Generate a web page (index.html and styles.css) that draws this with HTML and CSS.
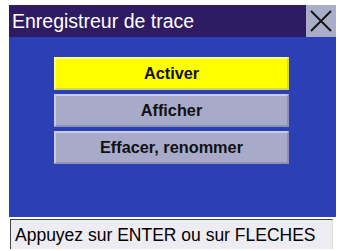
FILE: index.html
```html
<!DOCTYPE html>
<html>
<head>
<meta charset="utf-8">
<link rel="stylesheet" href="styles.css">
</head>
<body>
<div class="device">
  <div class="titlebar">
    <div class="title">Enregistreur de trace</div>
    <div class="close">
      <svg width="30" height="32" viewBox="0 0 30 32"><path d="M5 6 L25 26 M25 6 L5 26" stroke="#111" stroke-width="1.8" fill="none"/></svg>
    </div>
  </div>
  <div class="main">
    <div class="menu">
      <div class="btn active">Activer</div>
      <div class="btn">Afficher</div>
      <div class="btn">Effacer, renommer</div>
    </div>
  </div>
  <div class="status">Appuyez sur ENTER ou sur FLECHES</div>
</div>
</body>
</html>
```
FILE: styles.css
```css
html, body {
  margin: 0;
  padding: 0;
  background: #fff;
}
.device {
  margin-left: 9px;
  padding-top: 5px;
  width: 327px;
  font-family: "Liberation Sans", Arial, sans-serif;
}
.titlebar {
  display: flex;
  height: 32px;
  background: #2e1b62;
}
.title {
  flex: 1;
  color: #fff;
  font-size: 19.5px;
  line-height: 32px;
  padding-left: 3px;
}
.close {
  width: 30px;
  height: 32px;
  background: #a9adc7;
}
.close svg { display: block; }
.main {
  height: 180px;
  background: #2a40b4;
  padding-top: 20px;
  box-sizing: border-box;
}
.menu {
  margin-left: 45px;
  width: 235px;
  display: flex;
  flex-direction: column;
  gap: 4px;
}
.btn {
  height: 29px;
  background: #a7aac9;
  border: 2px solid #c9cbe0;
  border-right-color: #8d90b3;
  border-bottom-color: #8d90b3;
  text-align: center;
  font-weight: bold;
  font-size: 16.3px;
  line-height: 29px;
  color: #111;
}
.btn.active {
  background: #ffff00;
  border-color: #ffff8a #d4d45c #d4d45c #ffff8a;
}
.status {
  margin-top: 2px;
  margin-left: 1px;
  width: 323px;
  height: 30px;
  box-sizing: border-box;
  background: #ececf2;
  border-top: 1px solid #444;
  border-left: 1px solid #444;
  border-right: 1px solid #ddd;
  font-size: 17.5px;
  line-height: 30px;
  padding-left: 4px;
  color: #000;
  white-space: nowrap;
}
```
